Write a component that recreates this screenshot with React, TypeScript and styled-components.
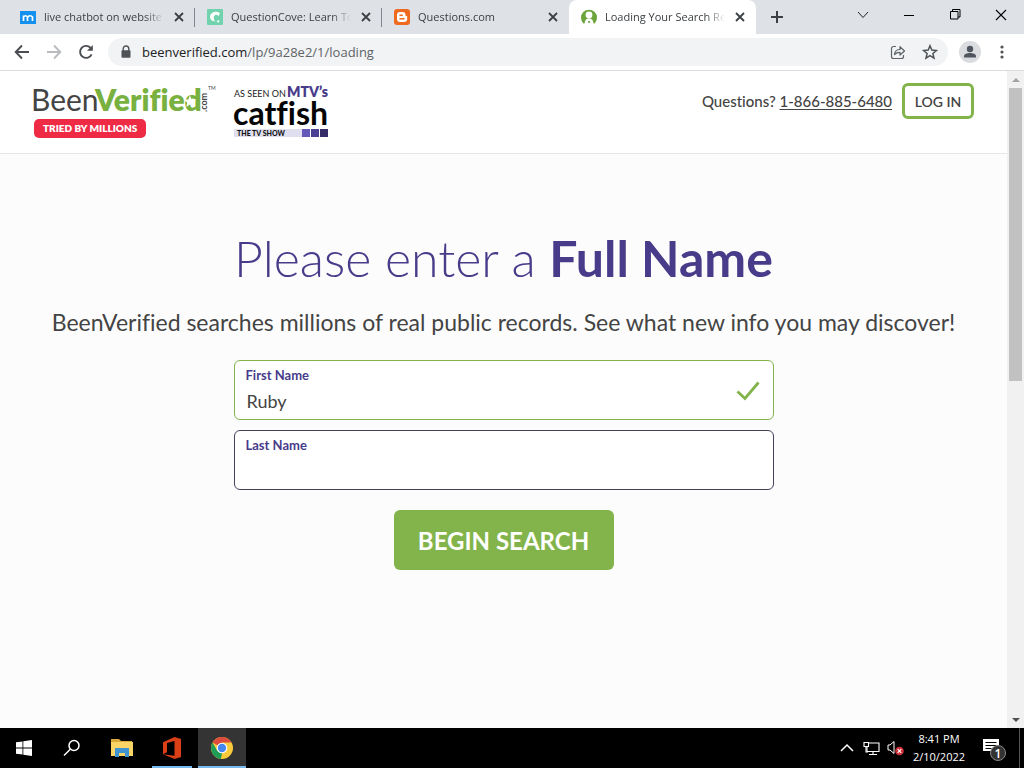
import React from "react";
import styled, { createGlobalStyle } from "styled-components";

const uiFont = '"Open Sans", "Noto Sans", sans-serif';
const brandFont = 'Lato, "Open Sans", sans-serif';
const green = "#82b44b";
const purple = "#483b8a";

const GlobalStyle = createGlobalStyle`
  *, *::before, *::after { box-sizing: border-box; }
  body { margin: 0; font-family: ${brandFont}; font-variant-ligatures: none; color: #444; background: #fcfcfc; }
  button { font: inherit; color: inherit; border: 0; padding: 0; background: none; cursor: pointer; }
  svg { display: block; flex: none; overflow: visible; }
`;

const Desktop = styled.div`
  min-height: 100vh;
  display: flex;
  flex-direction: column;
`;

const TabStrip = styled.nav`
  display: flex;
  height: 34px;
  padding-left: 8px;
  background: #dee1e6;
  font-family: ${uiFont};
`;

const Tab = styled.div<{ $active?: boolean; $divided?: boolean }>`
  position: relative;
  flex: 0 1 187px;
  min-width: 0;
  display: flex;
  align-items: center;
  gap: 8px;
  padding: 0 9px 0 12px;
  border-radius: 8px 8px 0 0;
  background: ${(p) => (p.$active ? "#fff" : "transparent")};
  &::after {
    content: "";
    display: ${(p) => (p.$divided ? "block" : "none")};
    position: absolute;
    right: 0;
    top: 8px;
    width: 1px;
    height: 19px;
    background: #80868b;
  }
`;

const TabTitle = styled.span`
  flex: 1;
  min-width: 0;
  overflow: hidden;
  white-space: nowrap;
  font-size: 11px;
  line-height: 18px;
  color: #3c4043;
  mask-image: linear-gradient(to right, #000 84%, transparent);
`;

const IconButton = styled.button<{ $w: number }>`
  flex: none;
  width: ${(p) => p.$w}px;
  display: flex;
  align-items: center;
  justify-content: center;
  color: #3c4043;
`;

const WindowControls = styled.div`
  display: flex;
  height: 29px;
  margin-left: auto;
`;

const Toolbar = styled.div`
  display: flex;
  align-items: center;
  height: 37px;
  padding: 0 6px;
  background: #fff;
  border-bottom: 1px solid #dadce0;
  font-family: ${uiFont};
`;

const AddressBar = styled.div`
  flex: 1;
  min-width: 0;
  display: flex;
  align-items: center;
  height: 28px;
  margin: 0 6px;
  padding: 0 2px 0 12px;
  border-radius: 14px;
  background: #f1f3f4;
`;

const AddressField = styled.input`
  position: absolute;
  inset: 0;
  width: 100%;
  border: 0;
  padding: 0;
  background: none;
  color: transparent;
  font: inherit;
  outline: 0;
`;

const AddressText = styled.div`
  position: relative;
  flex: 1;
  margin-left: 10px;
  font-size: 13px;
  line-height: 20px;
  color: #5f6368;
  white-space: nowrap;
  b { font-weight: 400; color: #202124; }
`;

const Viewport = styled.div`
  flex: 1;
  display: flex;
`;

const Page = styled.div`
  flex: 1;
  min-width: 0;
`;

const SiteHeader = styled.header`
  display: flex;
  align-items: flex-start;
  min-height: 83px;
  padding: 12px 33px 12px 34px;
  background: #fff;
  border-bottom: 1px solid #e6e6e6;
`;

const Brand = styled.div`
  display: flex;
  flex-direction: column;
  align-items: flex-start;
  width: 200px;
`;

const Ribbon = styled.span`
  height: 19px;
  padding: 0 9px;
  border-radius: 5px;
  background: #ee2a45;
  color: #fff;
  font-size: 10px;
  font-weight: 800;
  line-height: 19px;
  white-space: nowrap;
`;

const HelpArea = styled.div`
  margin-left: auto;
  display: flex;
  align-items: center;
  gap: 10px;
  font-size: 15px;
  font-weight: 500;
  white-space: nowrap;
  a { color: inherit; text-decoration: underline; text-underline-offset: 2px; }
`;

const LoginButton = styled.button`
  height: 36px;
  width: 72px;
  border: 3px solid ${green};
  border-radius: 6px;
  background: #fff;
  font-size: 14px;
  font-weight: 600;
`;

const Main = styled.main`
  display: flex;
  flex-direction: column;
  align-items: center;
  padding: 72px 24px 0;
`;

const Headline = styled.h1`
  margin: 0;
  font-size: 50px;
  line-height: 64px;
  font-weight: 300;
  color: ${purple};
  text-align: center;
  strong { font-weight: 700; }
`;

const Lead = styled.p`
  margin: 16px 0 22px;
  font-size: 23px;
  line-height: 32px;
  text-align: center;
`;

const SearchForm = styled.form`
  width: 100%;
  max-width: 540px;
  display: flex;
  flex-direction: column;
  align-items: center;
  gap: 10px;
`;

const Field = styled.div<{ $valid?: boolean }>`
  width: 100%;
  height: 60px;
  display: flex;
  align-items: center;
  padding: 0 13px 0 11px;
  border: 1px solid ${(p) => (p.$valid ? green : "#45405c")};
  border-radius: 6px;
  background: #fff;
`;

const FieldBody = styled.div`
  flex: 1;
  display: flex;
  flex-direction: column;
  height: 100%;
  padding-top: 4px;
`;

const FieldLabel = styled.label`
  font-size: 13px;
  line-height: 20px;
  font-weight: 700;
  color: ${purple};
`;

const FieldInput = styled.input`
  border: 0;
  outline: 0;
  padding: 0 1px;
  height: 32px;
  background: transparent;
  font: 400 18px/32px ${brandFont};
  color: #444;
`;

const SubmitButton = styled.button`
  width: 220px;
  height: 60px;
  margin-top: 10px;
  border-radius: 6px;
  background: ${green};
  color: #fff;
  font-size: 24px;
  font-weight: 700;
`;

const Scrollbar = styled.div`
  width: 17px;
  display: flex;
  flex-direction: column;
  align-items: center;
  background: #f1f1f1;
`;

const ScrollTrack = styled.div`
  flex: 1;
  width: 13px;
`;

const ScrollThumb = styled.div`
  height: 47%;
  background: #c1c1c1;
`;

const ScrollArrow = styled.div`
  height: 17px;
  display: flex;
  align-items: center;
`;

const Taskbar = styled.footer`
  display: flex;
  align-items: stretch;
  height: 40px;
  background: #000;
  color: #fff;
  font-family: ${uiFont};
`;

const TaskButton = styled.button<{ $current?: boolean; $open?: boolean; $gap?: boolean }>`
  width: 48px;
  margin-left: ${(p) => (p.$gap ? 2 : 0)}px;
  display: flex;
  align-items: center;
  justify-content: center;
  background: ${(p) =>
    p.$open || p.$current
      ? `linear-gradient(#76b9ed, #76b9ed) bottom / ${p.$current ? "100%" : "40px"} 2px no-repeat`
      : "none"};
  background-color: ${(p) => (p.$current ? "#343434" : "transparent")};
`;

const Tray = styled.div`
  margin-left: auto;
  display: flex;
  align-items: center;
`;

const Clock = styled.time`
  width: 64px;
  text-align: center;
  font-size: 11px;
  line-height: 18px;
  white-space: nowrap;
`;

const ShowDesktop = styled.div`
  align-self: stretch;
  width: 5px;
  border-left: 1px solid #555;
`;

const CloseIcon = () => (
  <svg width="14" height="14" viewBox="0 0 14 14" stroke="currentColor" strokeWidth="1.8">
    <path d="M3 3l8 8M11 3l-8 8" />
  </svg>
);

const tabs = [
  {
    title: "live chatbot on website",
    divided: true,
    icon: (
      <svg width="16" height="16" viewBox="0 0 16 16">
        <path fill="#1590ee" d="M0 2h16v13H0z" />
        <path d="M3.500 12V6.500M3.500 8q2-2.500 4 0v4M7.500 8q3-2.500 5 0v4" fill="none" stroke="#fff" strokeWidth="1.700" />
      </svg>
    ),
  },
  {
    title: "QuestionCove: Learn To Succeed",
    divided: true,
    icon: (
      <svg width="16" height="16" viewBox="0 0 16 16">
        <rect width="16" height="16" rx="1" fill="#71d2ae" />
        <path d="M13 4.200C9.500 1 3 3 3 7.800c0 3 2.500 4.700 5.500 4.700-2-1.500-2.500-5.500-.2-6.500 1.700-.7 2.700.2 2.900 1.400z" fill="#fff" />
        <path d="M9.500 12l3-1-1 3z" fill="#fff" />
      </svg>
    ),
  },
  {
    title: "Questions.com",
    icon: (
      <svg width="16" height="16" viewBox="0 0 16 16">
        <rect width="16" height="16" rx="3" fill="#ee6a1f" />
        <path d="M6 3h2.500C10.500 3 11.500 4.200 11.500 6c0 .7.300 1 1 1 .5 0 .7.300.7.800V10c0 2-1.200 3-3.200 3H6c-2 0-3-1-3-3V6c0-2 1-3 3-3z" fill="#fff" />
        <path d="M6 6.200h2.200M6 9.800h4" stroke="#ee6a1f" strokeWidth="1.500" strokeLinecap="round" />
      </svg>
    ),
  },
  {
    title: "Loading Your Search Results",
    active: true,
    icon: (
      <svg width="16" height="16" viewBox="0 0 16 16">
        <path d="M2.500 14.500A8 8 0 1 1 13.500 14.500z" fill="#6ba43a" />
        <circle cx="8" cy="6" r="3.400" fill="#fff" />
        <path d="M3.500 16c0-4.500 1.500-6.500 4.500-6.500s4.500 2 4.500 6.500z" fill="#fff" />
        <circle cx="8" cy="13" r="1.100" fill="#6ba43a" />
      </svg>
    ),
  },
];

const BeenVerifiedLogo = () => (
  <svg width="182" height="36" viewBox="0 0 182 36" fontFamily={brandFont} role="img" aria-label="BeenVerified.com">
    <text x="-3" y="28" fontSize="30" fill="#444">Been</text>
    <text x="61" y="28" fontSize="30" fontWeight="800" fill="#78b13f">Verified</text>
    <path d="M156 12.500l1.700 4 4.300.3-3.300 2.800 1.100 4.200-3.800-2.300-3.700 2.300 1-4.200-3.300-2.800 4.300-.3z" fill="#fff" />
    <text transform="translate(173 29) rotate(-90)" fontSize="9" fontWeight="700" fill="#444">.com</text>
    <text x="174" y="7" fontSize="5" fill="#444">TM</text>
  </svg>
);

const CatfishLogo = () => (
  <svg width="96" height="56" viewBox="0 0 96 56" fontFamily={brandFont} role="img" aria-label="As seen on MTV's Catfish, the TV show">
    <text x="0" y="14" fontSize="9" fill="#222">AS SEEN ON</text>
    <text x="53" y="14" fontSize="14" fontWeight="800" fill={purple}>MTV’s</text>
    <text x="-1" y="42" fontSize="32" fontWeight="700" fill="#050505">catfish</text>
    <path fill="#dfdff0" d="M0 46h68v8H0z" />
    <path fill="#6458b8" d="M68 46h8v8h-8z" />
    <path fill="#4a3f93" d="M77 46h8v8h-8z" />
    <path fill="#352c68" d="M86 46h8v8h-8z" />
    <text x="3" y="53" fontSize="7" fontWeight="900" fill="#111">THE TV SHOW</text>
  </svg>
);

export default function App() {
  return (
    <Desktop>
      <GlobalStyle />
      <TabStrip aria-label="Tabs">
        {tabs.map((t) => (
          <Tab key={t.title} $active={t.active} $divided={t.divided}>
            {t.icon}
            <TabTitle>{t.title}</TabTitle>
            <IconButton $w={14} aria-label={`Close ${t.title}`}><CloseIcon /></IconButton>
          </Tab>
        ))}
        <IconButton $w={42} aria-label="New tab">
          <svg width="14" height="14" viewBox="0 0 14 14" stroke="currentColor" strokeWidth="2"><path d="M7 1v12M1 7h12" /></svg>
        </IconButton>
        <WindowControls>
          <IconButton $w={46} aria-label="Search tabs">
            <svg width="12" height="12" viewBox="0 0 12 12" fill="none" stroke="#222"><path d="M1 3l5 5.500L11 3" /></svg>
          </IconButton>
          <IconButton $w={46} aria-label="Minimize">
            <svg width="10" height="10" viewBox="0 0 10 10" fill="#000"><path d="M0 5h10v1H0z" /></svg>
          </IconButton>
          <IconButton $w={46} aria-label="Restore">
            <svg width="11" height="11" viewBox="0 0 11 11" fill="none" stroke="#000"><path d="M.5 2.500h7.500v7.500H.5zM2.500 2.500V.5h7.500v7.500H8" /></svg>
          </IconButton>
          <IconButton $w={46} aria-label="Close window">
            <svg width="12" height="12" viewBox="0 0 12 12" stroke="#000" strokeWidth="1.100"><path d="M1 1l10 10M11 1L1 11" /></svg>
          </IconButton>
        </WindowControls>
      </TabStrip>

      <Toolbar>
        <IconButton $w={32} aria-label="Back">
          <svg width="16" height="16" viewBox="0 0 16 16" fill="none" stroke="#4a4d51" strokeWidth="1.900"><path d="M15 8H2M8 1.500L1.700 8 8 14.500" /></svg>
        </IconButton>
        <IconButton $w={32} aria-label="Forward">
          <svg width="16" height="16" viewBox="0 0 16 16" fill="none" stroke="#b9bbbe" strokeWidth="1.900"><path d="M1 8h13M8 1.500L14.300 8 8 14.500" /></svg>
        </IconButton>
        <IconButton $w={32} aria-label="Reload">
          <svg width="16" height="16" viewBox="0 0 16 16" fill="none" stroke="#4a4d51" strokeWidth="1.900"><path d="M13.600 10.300A6 6 0 1 1 12.400 3.700L14 5.300" /><path d="M14.800 1v5.800H9z" fill="#4a4d51" stroke="none" /></svg>
        </IconButton>
        <AddressBar>
          <svg width="12" height="14" viewBox="0 0 12 14"><path d="M3.200 6V3.800a2.800 2.800 0 0 1 5.600 0V6" fill="none" stroke="#4f5357" strokeWidth="1.400" /><rect x="1.500" y="5.300" width="9" height="7.400" rx="1" fill="#4f5357" /></svg>
          <AddressText>
            <b>beenverified.com</b>/lp/9a28e2/1/loading
            <AddressField aria-label="Address" />
          </AddressText>
          <IconButton $w={32} aria-label="Share">
            <svg width="16" height="16" viewBox="0 0 16 16" fill="none" stroke="#5f6368" strokeWidth="1.200"><path d="M6 2.500H3.500a2 2 0 0 0-2 2v8a2 2 0 0 0 2 2h8a2 2 0 0 0 2-2V11" /><path d="M4.500 10.500c.4-3.500 2.300-5 5.500-5V2.700L14.500 7 10 11V8.300c-2.500 0-4 .500-5.500 2.200z" strokeLinejoin="round" /></svg>
          </IconButton>
          <IconButton $w={32} aria-label="Bookmark">
            <svg width="16" height="16" viewBox="0 0 16 16" fill="none" stroke="#4f5357" strokeWidth="1.500"><path d="M8 1.800l1.800 4.300 4.600.4-3.500 3 1.100 4.600L8 11.600l-4 2.500 1.100-4.600-3.500-3 4.600-.4z" /></svg>
          </IconButton>
        </AddressBar>
        <IconButton $w={32} aria-label="Profile">
          <svg width="22" height="22" viewBox="0 0 22 22"><circle cx="11" cy="11" r="11" fill="#dadce0" /><circle cx="11" cy="8" r="3.200" fill="#4f5660" /><path d="M5 16.500v-1.200c0-2 3-3.200 6-3.200s6 1.200 6 3.200v1.200z" fill="#4f5660" /></svg>
        </IconButton>
        <IconButton $w={32} aria-label="Menu">
          <svg width="4" height="14" viewBox="0 0 4 14" fill="#4f5357"><circle cx="2" cy="2" r="1.600" /><circle cx="2" cy="7" r="1.600" /><circle cx="2" cy="12" r="1.600" /></svg>
        </IconButton>
      </Toolbar>

      <Viewport>
        <Page>
          <SiteHeader>
            <Brand>
              <BeenVerifiedLogo />
              <Ribbon>TRIED BY MILLIONS</Ribbon>
            </Brand>
            <CatfishLogo />
            <HelpArea>
              <span>Questions? <a href="tel:18668856480">1-866-885-6480</a></span>
              <LoginButton type="button">LOG IN</LoginButton>
            </HelpArea>
          </SiteHeader>
          <Main>
            <Headline>Please enter a <strong>Full Name</strong></Headline>
            <Lead>BeenVerified searches millions of real public records. See what new info you may discover!</Lead>
            <SearchForm onSubmit={(e) => e.preventDefault()}>
              <Field $valid>
                <FieldBody>
                  <FieldLabel htmlFor="first">First Name</FieldLabel>
                  <FieldInput id="first" defaultValue="Ruby" />
                </FieldBody>
                <svg width="24" height="24" viewBox="0 0 24 24" fill="none" stroke={green} strokeWidth="2.800"><path d="M1.500 13.500L9 20.500 22.500 4.500" /></svg>
              </Field>
              <Field>
                <FieldBody>
                  <FieldLabel htmlFor="last">Last Name</FieldLabel>
                  <FieldInput id="last" />
                </FieldBody>
              </Field>
              <SubmitButton type="submit">BEGIN SEARCH</SubmitButton>
            </SearchForm>
          </Main>
        </Page>
        <Scrollbar aria-hidden="true">
          <ScrollArrow><svg width="8" height="4" viewBox="0 0 8 4"><path d="M0 4l4-4 4 4z" fill="#a3a3a3" /></svg></ScrollArrow>
          <ScrollTrack><ScrollThumb /></ScrollTrack>
          <ScrollArrow><svg width="8" height="4" viewBox="0 0 8 4"><path d="M0 0l4 4 4-4z" fill="#505050" /></svg></ScrollArrow>
        </Scrollbar>
      </Viewport>

      <Taskbar>
        <TaskButton aria-label="Start">
          <svg width="16" height="16" viewBox="0 0 16 16" fill="#fff"><path d="M0 2.300L6.500 1.400v6.200H0zM7.300 1.300L16 0v7.600H7.300zM0 8.400h6.500v6.200L0 13.700zM7.300 8.400H16V16l-8.700-1.300z" /></svg>
        </TaskButton>
        <TaskButton aria-label="Search">
          <svg width="18" height="18" viewBox="0 0 18 18" fill="none" stroke="#fff" strokeWidth="1.500"><circle cx="11" cy="6.500" r="5" /><path d="M7.300 10.200L1 16.500" /></svg>
        </TaskButton>
        <TaskButton $gap aria-label="File Explorer">
          <svg width="22" height="18" viewBox="0 0 22 18"><path d="M0 0h8l2 2h11v5H0z" fill="#d9a93a" /><path d="M0 3h22v14H0z" fill="#f9d467" /><path d="M4 9h14v9h-4v-4H8v4H4z" fill="#3f93d3" /></svg>
        </TaskButton>
        <TaskButton $gap $open aria-label="Office">
          <svg width="20" height="22" viewBox="0 0 20 22"><path d="M1 5.200L12.500 0 19 2v18l-6.500 2L1 17.300l11.500 1.500V4L5 6v9.300l-4 2z" fill="#dc3e15" /></svg>
        </TaskButton>
        <TaskButton $gap $current aria-label="Chrome">
          <svg width="22" height="22" viewBox="0 0 22 22">
            <circle cx="11" cy="11" r="11" fill="#f9cb3c" />
            <path d="M11 11L1.500 5.500A11 11 0 0 1 20.500 5.500H11z" fill="#dd4b3e" />
            <path d="M1.500 5.500L6.200 13.700 11 16.500 9.800 21.900A11 11 0 0 1 1.500 5.500z" fill="#1d9d58" />
            <circle cx="11" cy="11" r="5.300" fill="#fff" /><circle cx="11" cy="11" r="4.200" fill="#4587ee" />
          </svg>
        </TaskButton>
        <Tray>
          <IconButton $w={24} aria-label="Show hidden icons">
            <svg width="14" height="8" viewBox="0 0 14 8" fill="none" stroke="#fff" strokeWidth="1.500"><path d="M1 7l6-6 6 6" /></svg>
          </IconButton>
          <IconButton $w={24} aria-label="Network">
            <svg width="17" height="15" viewBox="0 0 17 15" fill="none" stroke="#fff" strokeWidth="1.100"><path d="M5 2h11v8.500H4V6M10 10.500v3M6 13.500h8" /><path d="M1 1.500h4.500v4H1zM3 5.500v5.500h2" /></svg>
          </IconButton>
          <IconButton $w={24} aria-label="Volume muted">
            <svg width="17" height="16" viewBox="0 0 17 16" fill="none" stroke="#fff"><path d="M1 5h2l4-3.500v12L3 10H1z" /><circle cx="12.500" cy="11" r="4.300" fill="#cf2e36" stroke="none" /><path d="M10.700 9.200l3.600 3.600M14.300 9.200l-3.600 3.600" strokeWidth="1.200" /></svg>
          </IconButton>
          <Clock dateTime="2022-02-10T20:41">8:41 PM<br />2/10/2022</Clock>
          <IconButton $w={48} aria-label="1 notification">
            <svg width="26" height="26" viewBox="0 0 26 26">
              <path d="M1 4h16v12h-5v3.500L8.500 16H1z" fill="#fff" />
              <path d="M3.500 7.500h11M3.500 10.500h11M3.500 13.500h6" stroke="#000" />
              <circle cx="16" cy="18" r="7.500" fill="#333" stroke="#888" />
              <text x="16" y="22.500" textAnchor="middle" fontSize="12" fontWeight="600" fill="#fff" fontFamily={uiFont}>1</text>
            </svg>
          </IconButton>
          <ShowDesktop />
        </Tray>
      </Taskbar>
    </Desktop>
  );
}
